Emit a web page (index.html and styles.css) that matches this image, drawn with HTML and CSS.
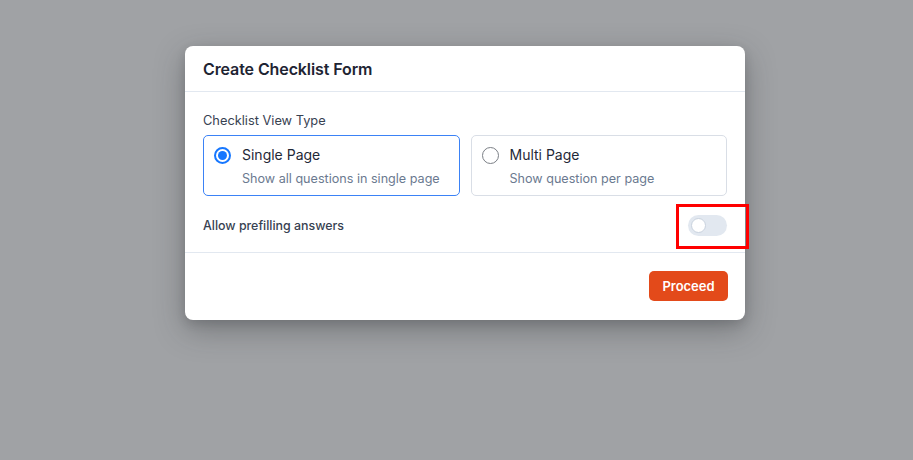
FILE: index.html
```html
<!DOCTYPE html>
<html lang="en">
<head>
<meta charset="utf-8">
<title>Create Checklist Form</title>
<link rel="stylesheet" href="styles.css">
</head>
<body>
<div class="overlay">
  <div class="modal">
    <div class="modal-header">
      <h2 class="modal-title">Create Checklist Form</h2>
    </div>
    <div class="modal-body">
      <div class="field-label">Checklist View Type</div>
      <div class="options">
        <label class="option option-selected">
          <span class="radio radio-checked"></span>
          <span class="option-text">
            <span class="option-title">Single Page</span>
            <span class="option-desc">Show all questions in single page</span>
          </span>
        </label>
        <label class="option">
          <span class="radio"></span>
          <span class="option-text">
            <span class="option-title">Multi Page</span>
            <span class="option-desc">Show question per page</span>
          </span>
        </label>
      </div>
      <div class="toggle-row">
        <span class="toggle-label">Allow prefilling answers</span>
        <span class="toggle-wrap">
          <span class="toggle"><span class="knob"></span></span>
          <span class="highlight"></span>
        </span>
      </div>
    </div>
    <div class="modal-footer">
      <button class="btn-primary">Proceed</button>
    </div>
  </div>
</div>
</body>
</html>
```

FILE: styles.css
```css
* { box-sizing: border-box; }
html, body {
  margin: 0;
  padding: 0;
  width: 913px;
  height: 460px;
  overflow: hidden;
  font-family: Inter, "Noto Sans", sans-serif;
}
.overlay {
  width: 913px;
  height: 460px;
  background: #a0a2a5;
  padding-top: 46px;
  padding-left: 185px;
}
.modal {
  width: 560px;
  background: #ffffff;
  border-radius: 8px;
  box-shadow: 0 10px 30px rgba(40, 42, 46, 0.35), 0 4px 10px rgba(40, 42, 46, 0.15);
}
.modal-header {
  height: 46px;
  padding: 0 18px;
  display: flex;
  align-items: center;
  border-bottom: 1px solid #e2e8f0;
}
.modal-title {
  margin: 0;
  font-size: 16px;
  font-weight: 600;
  color: #1e2433;
  letter-spacing: -0.1px;
}
.modal-body {
  padding: 20px 18px 0;
  border-bottom: 1px solid #e2e8f0;
}
.field-label {
  font-size: 12.8px;
  color: #374151;
  line-height: 18px;
  margin-bottom: 5px;
}
.options {
  display: grid;
  grid-template-columns: 1fr 1fr;
  gap: 11px;
}
.option {
  height: 61px;
  border: 1px solid #d9dee6;
  border-radius: 5px;
  display: flex;
  align-items: flex-start;
  padding: 10px 10px;
  gap: 11px;
}
.option-selected {
  border-color: #3b82f6;
}
.radio {
  width: 17px;
  height: 17px;
  border-radius: 50%;
  border: 1px solid #7b7f86;
  flex: none;
  margin-top: 1px;
  background: #fff;
}
.radio-checked {
  border: 2px solid #1677ff;
  position: relative;
}
.radio-checked::after {
  content: "";
  position: absolute;
  left: 2px;
  top: 2px;
  width: 9px;
  height: 9px;
  border-radius: 50%;
  background: #1677ff;
}
.option-text {
  display: flex;
  flex-direction: column;
  white-space: nowrap;
}
.option-title {
  font-size: 14px;
  color: #1f2937;
  line-height: 18px;
}
.option-desc {
  font-size: 12.6px;
  color: #6b7a90;
  line-height: 18px;
  margin-top: 6px;
}
.toggle-row {
  display: flex;
  justify-content: space-between;
  align-items: center;
  height: 56px;
  padding-top: 2px;
}
.toggle-label {
  font-size: 12.4px;
  font-weight: 500;
  color: #374151;
}
.toggle-wrap {
  position: relative;
  display: block;
  width: 39px;
  height: 21px;
}
.toggle {
  display: block;
  width: 39px;
  height: 21px;
  border-radius: 11px;
  background: #e2e8f0;
  position: relative;
}
.knob {
  position: absolute;
  left: 3px;
  top: 3px;
  width: 15px;
  height: 15px;
  border-radius: 50%;
  background: #ffffff;
  border: 1px solid #c9d2de;
}
.highlight {
  position: absolute;
  left: -12px;
  top: -11px;
  width: 73px;
  height: 45px;
  border: 3px solid #ff0000;
}
.modal-footer {
  display: flex;
  justify-content: flex-end;
  padding: 18px 17px 19px;
}
.btn-primary {
  width: 79px;
  height: 30px;
  border: none;
  border-radius: 5px;
  background: #e34a1a;
  color: #ffffff;
  font-family: Inter, "Noto Sans", sans-serif;
  font-size: 13px;
  font-weight: 600;
  padding: 0;
}
```
